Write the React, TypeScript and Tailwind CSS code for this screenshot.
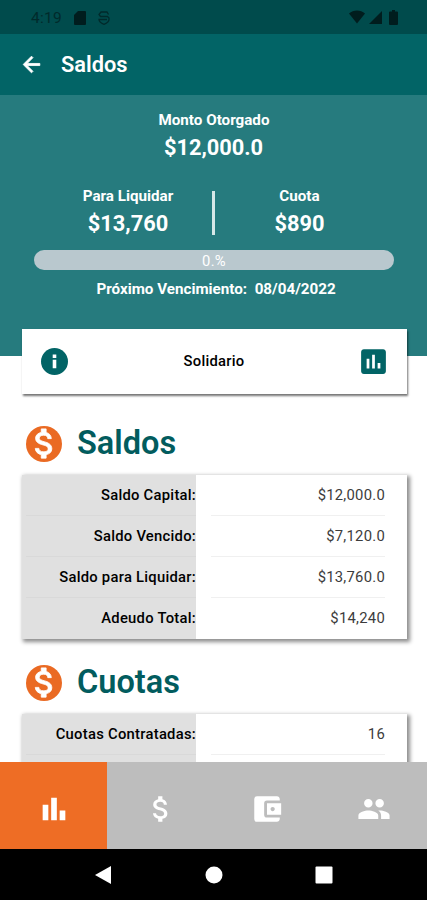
import React, { useState } from 'react';
import type { IconType } from 'react-icons';
import {
  MdAccountBalanceWallet,
  MdArrowBack,
  MdAttachMoney,
  MdBarChart,
  MdInsertChart,
  MdPeople,
} from 'react-icons/md';

interface Fila {
  etiqueta: string;
  valor: string;
}

const saldos: Fila[] = [
  { etiqueta: 'Saldo Capital:', valor: '$12,000.0' },
  { etiqueta: 'Saldo Vencido:', valor: '$7,120.0' },
  { etiqueta: 'Saldo para Liquidar:', valor: '$13,760.0' },
  { etiqueta: 'Adeudo Total:', valor: '$14,240' },
];

const cuotas: Fila[] = [
  { etiqueta: 'Cuotas Contratadas:', valor: '16' },
  { etiqueta: '', valor: '' },
];

const tabs: IconType[] = [MdBarChart, MdAttachMoney, MdAccountBalanceWallet, MdPeople];

const StatusBar: React.FC = () => (
  <div className="flex h-[34px] shrink-0 items-center bg-[#004b4c] pl-[31px] pr-[29px] text-[#002a2b]">
    <span className="w-[43px] pt-[3px] text-[15.5px] leading-none tracking-[0.3px]">4:19</span>
    {/* Tarjeta SD */}
    <svg width="12" height="14" viewBox="0 0 12 14" className="mt-px" fill="#001d1e">
      <path d="M4 0h7a1 1 0 0 1 1 1v12a1 1 0 0 1-1 1H1a1 1 0 0 1-1-1V4z" />
    </svg>
    <svg width="12" height="14" viewBox="0 0 12 14" className="ml-[12px] mt-px" fill="none" stroke="currentColor" strokeWidth="1.3">
      <path d="M10.5 3.5 9 1H3L1 3.5 2.500 5.500h7L11 7v1.500c0 2-2 3.500-5 4.800C3 12 1 10.500 1 8.500h8" />
    </svg>
    <div className="ml-auto flex items-center gap-1 text-[#001d1e]">
      <svg width="16" height="14" viewBox="0 0 16 14" fill="currentColor">
        <path d="M0 3.6C2.2 1.7 5 .6 8 .6s5.800 1.100 8 3L8 13.600z" />
      </svg>
      <svg width="13" height="13" viewBox="0 0 13 13" fill="currentColor">
        <path d="M13 0v13H0z" />
      </svg>
      <svg width="9" height="15" viewBox="0 0 9 15" className="ml-[3px]" fill="currentColor">
        <path d="M3 0h3v1.500h2a1 1 0 0 1 1 1V14a1 1 0 0 1-1 1H1a1 1 0 0 1-1-1V2.500a1 1 0 0 1 1-1h2z" />
      </svg>
    </div>
  </div>
);

const Resumen: React.FC = () => (
  <section className="h-[261px] shrink-0 bg-[#267b7e] pl-[34px] pr-[33px] pt-[15px] text-center font-bold text-white">
    <p className="text-[15.2px] leading-[20px]">Monto Otorgado</p>
    <p className="pt-[5px] pr-px text-[21.8px] leading-[26px]">$12,000.0</p>
    <div className="mt-[25px] flex">
      <div className="w-[188px] pt-[1px]">
        <p className="text-[15.2px] leading-[18px]">Para Liquidar</p>
        <p className="pt-[6px] text-[21.8px] leading-[26px]">$13,760</p>
      </div>
      <div className="mt-[5px] -ml-[10px] h-[44px] w-[3px] bg-[#d6e8e8]" />
      <div className="w-[169px] pt-[1px]">
        <p className="text-[15.2px] leading-[18px]">Cuota</p>
        <p className="pt-[6px] text-[21.8px] leading-[26px]">$890</p>
      </div>
    </div>
    <div className="mt-[13px] flex h-5 items-center justify-center rounded-full bg-[#b9c8ce]">
      <span className="pt-0.5 text-[14.8px] font-normal leading-none tracking-[0.26px]">0.%</span>
    </div>
    <p className="mt-[9px] whitespace-pre pl-[4px] text-[15.2px] leading-5">Próximo Vencimiento:  08/04/2022</p>
  </section>
);

const Titulo: React.FC<{ children: string }> = ({ children }) => (
  <div className="flex items-center gap-[15px]">
    <div className="flex size-[36px] items-center justify-center rounded-full bg-[#ea6a23] text-white">
      <MdAttachMoney size={39} className="shrink-0 [&>path:last-child]:stroke-current [&>path:last-child]:stroke-[0.5px]" />
    </div>
    <h2 className="text-[32.5px] font-semibold leading-[43px] text-[#025c5e]">{children}</h2>
  </div>
);

const Tabla: React.FC<{ filas: Fila[] }> = ({ filas }) => (
  <div className="shadow-[2px_2px_4px_1px_rgba(0,0,0,0.45)]">
    {filas.map((fila, i) => (
      <div key={i} className="flex h-[41px] text-[14.8px] tracking-[0.26px]">
        <div className="w-[174px] bg-[#e0e0e0] pl-1">
          <div className={`h-full text-right font-medium leading-[41px] text-black ${i < filas.length - 1 ? 'border-b border-[#d9d9d9]' : ''}`}>
            {fila.etiqueta}
          </div>
        </div>
        <div className="flex-1 bg-white pl-[15px] pr-[22px]">
          <div className={`h-full text-right leading-[41px] text-[#3c3c3c] ${i < filas.length - 1 ? 'border-b border-[#f0f0f0]' : ''}`}>
            {fila.valor}
          </div>
        </div>
      </div>
    ))}
  </div>
);

const App: React.FC = () => {
  const [activo, setActivo] = useState(0);

  return (
    <div className="flex h-[900px] w-full max-w-[427px] flex-col overflow-hidden bg-white font-['Roboto',sans-serif]">
      <StatusBar />
      <header className="flex h-[61px] shrink-0 items-center bg-[#026466] pl-[19px] text-white">
        <button aria-label="Volver">
          <MdArrowBack size={25} className="[&>path:last-child]:stroke-current [&>path:last-child]:stroke-[0.8px]" />
        </button>
        <h1 className="pl-[17px] text-[21.8px] font-semibold leading-none">Saldos</h1>
      </header>

      <main className="flex min-h-0 flex-1 flex-col overflow-hidden">
        <Resumen />
        <div className="px-[22px] pr-[20px]">
          <div className="relative -mt-[27px] flex h-[65px] items-center justify-between bg-white px-[19px] pr-[17px] text-[#026466] shadow-[1px_2px_2px_0px_rgba(0,0,0,0.55)]">
            <svg width="27" height="27" viewBox="0 0 27 27">
              <circle cx="13.5" cy="13.5" r="13.5" fill="#026466" />
              <path d="M11.7 11.7h3.600v8.600h-3.600zM11.700 6.500h3.600v3.400h-3.600z" fill="#fff" />
            </svg>
            <span className="pl-[3px] text-[14.8px] font-medium tracking-[0.26px] text-black">Solidario</span>
            <MdInsertChart size={33} />
          </div>
          <div className="mt-[28px] pl-[4px]">
            <Titulo>Saldos</Titulo>
          </div>
          <div className="mt-[10px]">
            <Tabla filas={saldos} />
          </div>
          <div className="mt-[22px] pl-[4px]">
            <Titulo>Cuotas</Titulo>
          </div>
          <div className="mt-[10px]">
            <Tabla filas={cuotas} />
          </div>
        </div>
      </main>

      <nav className="z-10 flex h-[87px] shrink-0 bg-[#bdbdbd] text-white">
        {tabs.map((Icono, i) => (
          <button
            key={i}
            onClick={() => setActivo(i)}
            className={`flex flex-1 items-center justify-center pl-px pt-1.5 ${activo === i ? 'bg-[#ee6d25]' : ''}`}
          >
            <Icono size={34} />
          </button>
        ))}
      </nav>

      <div className="flex h-[51px] shrink-0 items-center bg-black pl-[95px]">
        <svg width="238" height="18" viewBox="0 0 238 18" fill="#fff">
          <path d="M16 0v18L0 9z" />
          <circle cx="119" cy="9" r="8.5" />
          <rect x="220.5" y="0.5" width="17" height="17" rx="1" />
        </svg>
      </div>
    </div>
  );
};

export default App;
